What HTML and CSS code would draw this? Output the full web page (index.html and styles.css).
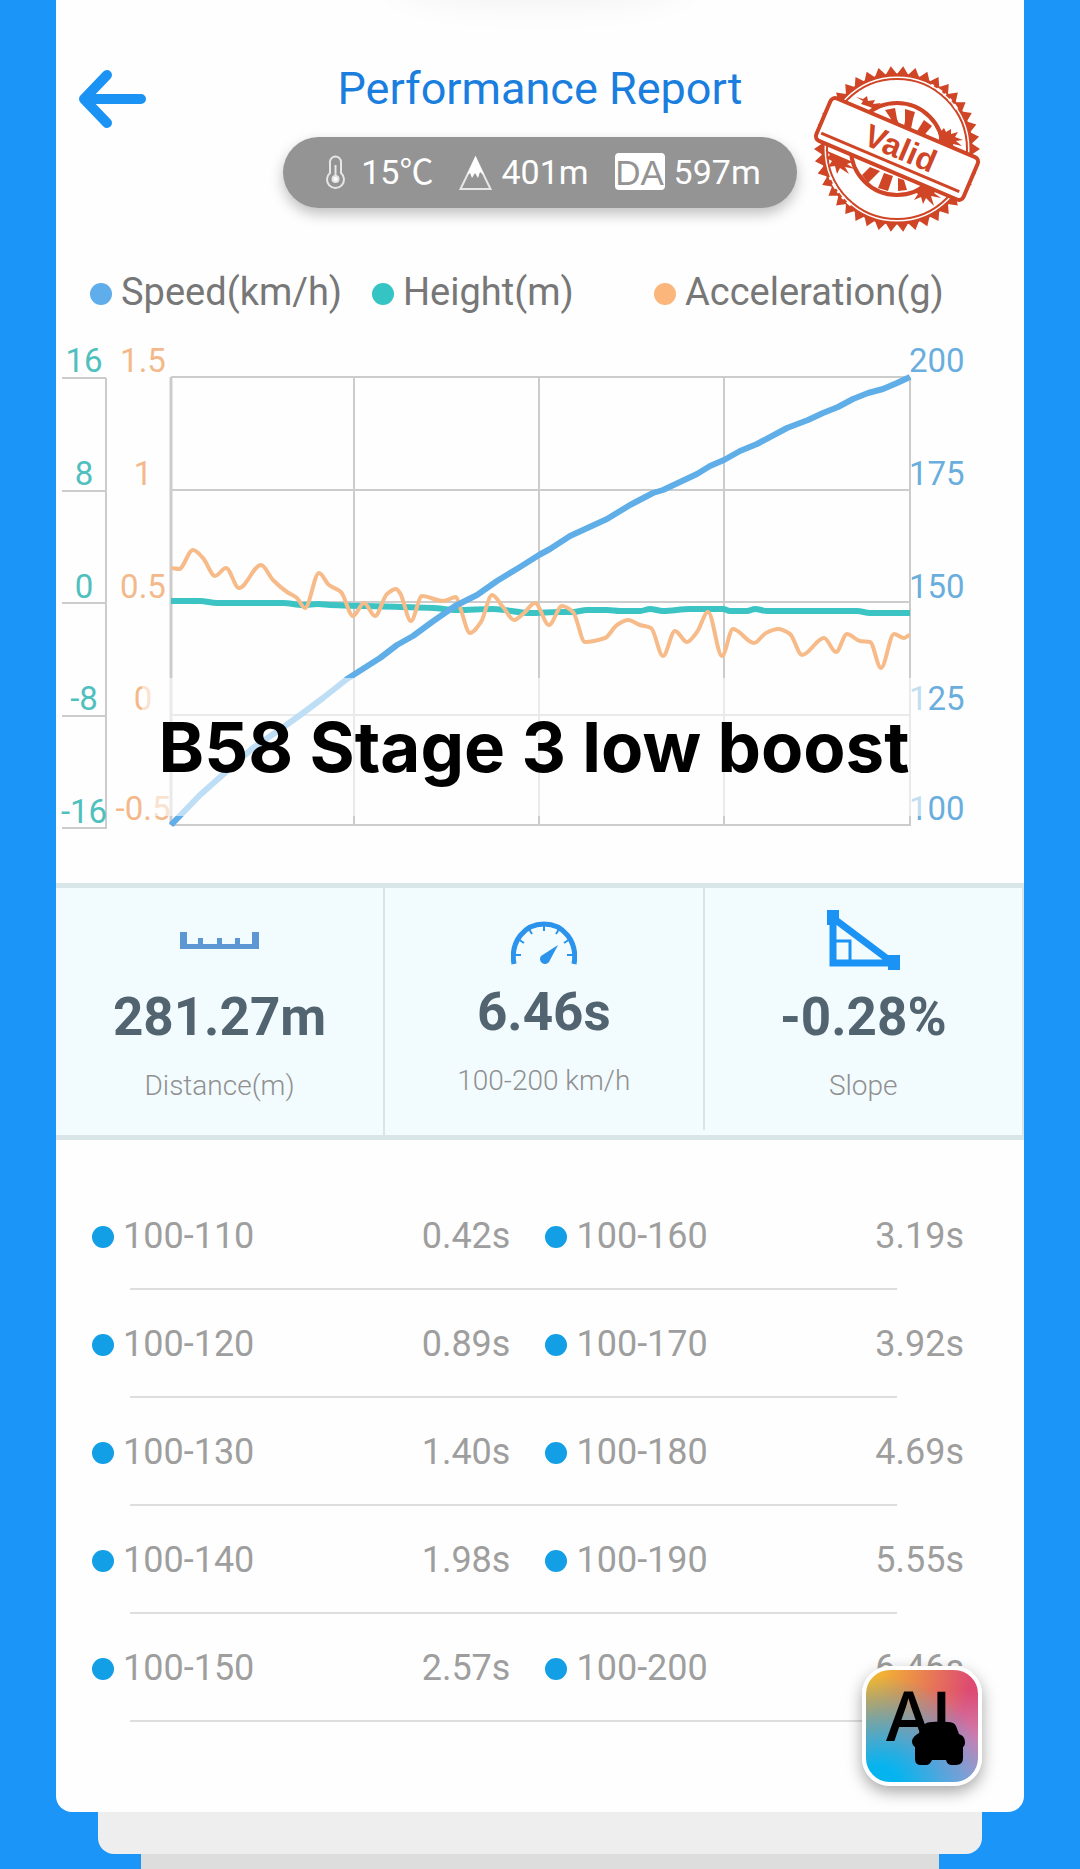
FILE: index.html
```html
<!DOCTYPE html>
<html lang="en">
<head>
    <meta charset="UTF-8">
    <meta name="viewport" content="width=device-width, initial-scale=1.0">
    <title>Performance Report</title>
    <link rel="stylesheet" href="styles.css">
</head>
<body>
    <main class="card">
        <header class="header">
            <button type="button" class="back" aria-label="Back">
                <svg width="68" height="58" viewBox="0 0 68 58">
                    <path d="M28 5 L5 29 L28 53 M6 29 H62" fill="none" stroke="#1b93f5" stroke-width="10" stroke-linecap="round" stroke-linejoin="round"/>
                    <path d="M5 29 L16 18 V40 Z" fill="#1b93f5"/>
                </svg>
            </button>

            <div class="heading">
                <h1>Performance Report</h1>
                <div class="conditions">
                    <span class="condition">
                        <svg width="33" height="34" viewBox="0 0 33 34" fill="none" stroke="#e6e6e6" stroke-width="2">
                            <path d="M11 18 V7 a5.500 5.500 0 0 1 11 0 V18 a8.500 8.500 0 1 1 -11 0 Z"/>
                            <path d="M16.500 10 V23"/>
                            <circle cx="16.500" cy="24" r="3" fill="#fff"/>
                        </svg>
                        15℃
                    </span>
                    <span class="condition">
                        <svg width="33" height="36" viewBox="0 0 33 36">
                            <path d="M16.500 4 L31.500 35 H1.500 Z" fill="none" stroke="#e6e6e6" stroke-width="2"/>
                            <path d="M16.500 2 L25 21 L21 18 L19 24 L16 19 L13 24 L11 19 L8 21 Z" fill="#fff"/>
                        </svg>
                        401m
                    </span>
                    <span class="condition"><abbr class="da">DA</abbr> 597m</span>
                </div>
            </div>

            <svg class="stamp" width="170" height="166" viewBox="-85 -83 170 166">
                <polygon id="stampTeeth" fill="#cf4526"/>
                <circle r="74" fill="#fff" stroke="#cf4526" stroke-width="3"/>
                <circle r="70" fill="none" stroke="#cf4526" stroke-width="2"/>
                <circle r="46" fill="none" stroke="#cf4526" stroke-width="4"/>
                <g fill="#cf4526">
                    <path d="M-12 -39 L-2 -41 L0 -30 L4 -20 L-5 -22 L-9 -25 L-6 -30 Z"/>
                    <path d="M8 -40 L18 -37 L16 -30 L13 -15 L6 -18 L8 -28 Z"/>
                    <path d="M27 -29 L35 -23 L24 -10 L17 -13 Z"/>
                    <path d="M-35 26 L-27 18 L-17 22 L-29 34 Z"/>
                    <path d="M-13 24 L-4 27 L-9 42 L-19 39 Z"/>
                    <path d="M1 29 L7 31 L10 41 L1 42 Z"/>
                    <path d="M-41 -52 L-34 -50 L-30 -53 L-29 -48 L-22 -49 L-24 -45 L-16 -46 L-23 -40 L-27 -42 L-36 -45 L-34 -48 Z"/>
                    <path d="M42 -16 L47 -21 L49 -17 L54 -20 L54 -15 L61 -17 L58 -12 L66 -9 L59 -8 L65 -3 L56 -5 L57 1 L42 -5 Z"/>
                    <path d="M-72 1 L-58 7 L-44 13 L-50 15 L-42 20 L-52 18 L-48 25 L-57 19 L-60 25 L-62 17 L-69 18 L-65 12 L-71 9 L-67 6 Z"/>
                    <path d="M17 42 L27 34 L42 40 L37 44 L44 49 L34 47 L37 57 L29 49 L26 55 L24 48 L17 51 L21 45 Z"/>
                </g>
                <!-- worn patches in the rim -->
                <g stroke="#fff" stroke-width="3" stroke-dasharray="3 4 6 3 2 5" fill="none">
                    <path d="M34 -64 A72 72 0 0 1 60 -40"/>
                    <path d="M-67 28 A72 72 0 0 0 -46 56"/>
                </g>
                <g transform="rotate(23)">
                    <rect x="-80" y="-23" width="160" height="46" rx="5" fill="#fff" stroke="#cf4526" stroke-width="4"/>
                    <path d="M-76 15 H74" stroke="#cf4526" stroke-width="3"/>
                    <text class="stamp-text" x="3" y="9" text-anchor="middle">Valid</text>
                </g>
            </svg>
        </header>

        <ul class="legend">
            <li class="speed">Speed(km/h)</li>
            <li class="height">Height(m)</li>
            <li class="accel">Acceleration(g)</li>
        </ul>

        <svg class="chart" viewBox="0 0 968 500" role="img" aria-label="Speed, height and acceleration">
            <g class="grid">
                <path d="M115 47 H854 M115 160 H854 M115 272 H854 M115 385 H854 M115 495 H854"/>
                <path d="M298 47 V495 M483 47 V495 M668 47 V495 M854 47 V496"/>
                <path class="axis" d="M115 47 V495"/>
                <path d="M6 48 H50 M6 161 H50 M6 273 H50 M6 386 H50 M6 498 H51 M50 48 V498"/>
            </g>
            <path id="heightLine" class="line height-line"/>
            <path id="accelLine" class="line accel-line"/>
            <path id="speedLine" class="line speed-line"/>
            <g class="scale height-scale">
                <text x="28" y="42">16</text>
                <text x="28" y="155">8</text>
                <text x="28" y="268">0</text>
                <text x="28" y="380">-8</text>
                <text x="28" y="493">-16</text>
            </g>
            <g class="scale accel-scale">
                <text x="87" y="42">1.5</text>
                <text x="87" y="155">1</text>
                <text x="87" y="268">0.5</text>
                <text x="87" y="380">0</text>
                <text x="87" y="490">-0.5</text>
            </g>
            <g class="scale speed-scale">
                <text x="853" y="42">200</text>
                <text x="853" y="155">175</text>
                <text x="853" y="268">150</text>
                <text x="853" y="380">125</text>
                <text x="853" y="490">100</text>
            </g>
            <rect class="note-box" x="86" y="348" width="780" height="138"/>
            <text class="note" x="478" y="442">B58 Stage 3 low boost</text>
        </svg>

        <section class="stats">
            <div class="stat">
                <div class="stat-icon">
                    <svg width="79" height="17" viewBox="0 0 79 17">
                        <path d="M0 0 H7 V12 H18 V6 H23 V12 H37 V6 H42 V12 H55 V6 H60 V12 H72 V0 H79 V17 H0 Z" fill="#5c97d4"/>
                    </svg>
                </div>
                <div class="stat-value">281.27m</div>
                <div class="stat-label">Distance(m)</div>
            </div>
            <div class="stat stat-time">
                <div class="stat-icon">
                    <svg width="66" height="44" viewBox="0 0 66 44" fill="none" stroke="#2b93ea">
                        <path d="M3 43 C-1 20 14 3 33 3 C52 3 67 20 63 43" stroke-width="5"/>
                        <path d="M33 4 V10 M18 8 L21 13 M48 8 L45 13 M7 18 L13 22 M59 18 L53 22 M4 34 H10 M62 34 H56" stroke-width="2"/>
                        <path d="M47 24 L38 41 A5 5 0 1 1 30 35 Z" fill="#2b93ea" stroke="none"/>
                    </svg>
                </div>
                <div class="stat-value">6.46s</div>
                <div class="stat-label">100-200 km/h</div>
            </div>
            <div class="stat">
                <div class="stat-icon">
                    <svg width="73" height="60" viewBox="0 0 73 60">
                        <path d="M6 8 V53 H66 Z" fill="none" stroke="#1b93f5" stroke-width="7"/>
                        <path d="M8 31 H23 V50" fill="none" stroke="#1b93f5" stroke-width="3"/>
                        <path d="M0 0 H12 V15 H0 Z M61 45 H73 V60 H61 Z" fill="#1b93f5"/>
                    </svg>
                </div>
                <div class="stat-value">-0.28%</div>
                <div class="stat-label">Slope</div>
            </div>
        </section>

        <table class="splits">
            <tr><th>100-110</th><td>0.42s</td><th>100-160</th><td>3.19s</td></tr>
            <tr><th>100-120</th><td>0.89s</td><th>100-170</th><td>3.92s</td></tr>
            <tr><th>100-130</th><td>1.40s</td><th>100-180</th><td>4.69s</td></tr>
            <tr><th>100-140</th><td>1.98s</td><th>100-190</th><td>5.55s</td></tr>
            <tr><th>100-150</th><td>2.57s</td><th>100-200</th><td>6.46s</td></tr>
        </table>

        <button type="button" class="ai-button" aria-label="AI car assistant">
            <svg viewBox="0 0 112 112">
                <text class="ai-text" x="20" y="71">AI</text>
                <path d="M58 55 Q60 52 66 52 Q74 51 82 52 Q88 52 90 56 L93 64 Q99 66 99 72 Q99 76 97 77 V88 Q97 95 90 95 H86 Q81 95 80 90 H66 Q64 95 60 95 H55 Q49 95 49 89 V77 Q46 75 46 71 Q47 66 53 63 Z"/>
            </svg>
        </button>
    </main>
    <div class="sheet sheet-second"></div>
    <div class="sheet sheet-third"></div>

    <script>
        const speed = [[115,495],[144,465],[171,441],[197,418],[229,396],[247,383],[267,368],[291,349],[324,328],[341,315],[357,306],[376,292],[399,276],[421,265],[441,251],[464,237],[483,225],[494,219],[514,206],[551,189],[574,175],[597,163],[607,160],[641,144],[654,136],[668,130],[684,121],[701,114],[731,98],[752,90],[767,83],[782,77],[797,69],[812,63],[827,59],[841,53],[854,47]];
        const height = [[115,271],[144,271],[161,273],[227,273],[247,275],[262,274],[274,275],[344,277],[377,278],[401,280],[437,279],[474,283],[504,282],[517,282],[531,280],[551,280],[564,281],[584,281],[594,279],[607,281],[634,279],[667,279],[674,281],[691,281],[699,279],[711,281],[801,281],[814,283],[854,283]];
        const accel = [[115,238],[123,239],[137,220],[147,228],[159,246],[170,238],[183,258],[205,235],[217,250],[231,262],[241,268],[249,278],[263,243],[273,255],[285,262],[297,286],[308,273],[319,286],[331,264],[340,259],[344,263],[355,291],[366,266],[387,271],[400,267],[404,277],[414,303],[425,292],[436,265],[447,277],[458,290],[468,283],[479,273],[493,295],[506,276],[517,282],[529,312],[549,308],[561,295],[572,290],[584,295],[595,298],[607,326],[619,301],[631,312],[641,302],[652,282],[666,326],[677,299],[698,313],[710,303],[722,299],[734,304],[746,325],[768,308],[780,322],[791,304],[804,311],[814,312],[825,338],[838,304],[848,308],[854,305]];

        // cubic curve through the points, flat at every peak and dip
        function smoothPath(points) {
            const slopes = points.map((p, i) => {
                if (i === 0 || i === points.length - 1) return 0;
                const a = points[i - 1];
                const b = points[i + 1];
                const before = (p[1] - a[1]) / (p[0] - a[0]);
                const after = (b[1] - p[1]) / (b[0] - p[0]);
                return before * after <= 0 ? 0 : 2 * before * after / (before + after);
            });
            let d = 'M' + points[0].join(' ');
            for (let i = 1; i < points.length; i++) {
                const a = points[i - 1];
                const b = points[i];
                const dx = (b[0] - a[0]) / 3;
                d += ' C' + [a[0] + dx, a[1] + slopes[i - 1] * dx, b[0] - dx, b[1] - slopes[i] * dx, b[0], b[1]].join(' ');
            }
            return d;
        }

        document.getElementById('speedLine').setAttribute('d', 'M' + speed.join(' L'));
        document.getElementById('heightLine').setAttribute('d', smoothPath(height));
        document.getElementById('accelLine').setAttribute('d', smoothPath(accel));

        const teeth = [];
        for (let i = 0; i < 84; i++) {
            const r = i % 2 ? 75 : 83;
            const angle = i * Math.PI / 42;
            teeth.push(r * Math.cos(angle) + ',' + r * Math.sin(angle));
        }
        document.getElementById('stampTeeth').setAttribute('points', teeth.join(' '));
    </script>
</body>
</html>
```
FILE: styles.css
```css
* {
    box-sizing: border-box;
}

body {
    margin: 0;
    background-color: #1b95f8;
    font-family: Roboto, "Noto Sans CJK SC", sans-serif;
}

button {
    border: none;
    padding: 0;
    background: none;
    cursor: pointer;
}

svg {
    display: block;
}

.card {
    position: relative;
    overflow: hidden;
    margin: 0 56px;
    padding-bottom: 90px;
    background-color: #fefefe;
    border-radius: 0 0 16px 16px;
}

/* soft shadow falling in from the top edge */
.card::before {
    content: "";
    position: absolute;
    top: -48px;
    left: 35%;
    width: 30%;
    height: 40px;
    border-radius: 50%;
    box-shadow: 0 4px 40px rgba(0, 0, 0, 0.08);
}

.sheet {
    height: 42px;
    margin: 0 98px;
    background-color: #eeeeee;
    border-radius: 0 0 16px 16px;
}

.sheet-third {
    height: 15px;
    margin: 0 141px;
    background-color: #dddddd;
    border-radius: 0;
}

.header {
    display: grid;
    grid-template-columns: 1fr auto 1fr;
    align-items: start;
    padding-top: 63px;
}

.back {
    justify-self: start;
    margin: 7px 0 0 23px;
}

.heading {
    text-align: center;
}

h1 {
    margin: 0 0 22px;
    font-size: 45px;
    line-height: 52px;
    font-weight: 400;
    color: #1a7ede;
}

.conditions {
    display: flex;
    align-items: center;
    gap: 26px;
    height: 71px;
    padding: 0 36px 2px;
    border-radius: 36px;
    background-color: #949494;
    box-shadow: 0 6px 14px rgba(0, 0, 0, 0.25);
    color: #fff;
    font-size: 34px;
    line-height: 40px;
}

.condition {
    display: flex;
    align-items: center;
    gap: 9px;
}

.da {
    width: 50px;
    height: 37px;
    border-radius: 4px;
    background-color: #fff;
    color: #949494;
    font-family: "Liberation Sans", sans-serif;
    font-size: 35px;
    line-height: 40px;
    text-align: center;
}

.stamp {
    justify-self: end;
    margin: 3px 42px 0 0;
}

.stamp-text {
    font: bold 32px "Liberation Sans", sans-serif;
    fill: #cf4526;
}

.legend {
    display: grid;
    grid-template-columns: repeat(3, minmax(0, 1fr));
    margin: 39px 88px 17px 34px;
    padding: 0;
    list-style: none;
    font-size: 38px;
    line-height: 42px;
    color: #777;
    white-space: nowrap;
}

.legend li::before,
.splits th::before {
    content: "";
    display: inline-block;
    width: 22px;
    height: 22px;
    margin-right: 9px;
    border-radius: 50%;
    background-color: #129fe6;
}

.legend .speed::before {
    background-color: #5fadea;
}

.legend .height::before {
    background-color: #35c4c4;
}

.legend .accel::before {
    background-color: #fbb67c;
}

.chart {
    width: 100%;
}

.grid path {
    fill: none;
    stroke: #cccccc;
    stroke-width: 2;
}

.grid .axis {
    stroke-width: 3;
}

.line {
    fill: none;
    stroke-linejoin: round;
}

.speed-line {
    stroke: #60aee8;
    stroke-width: 6;
}

.height-line {
    stroke: #3cc4c4;
    stroke-width: 6;
}

.accel-line {
    stroke: #f6bb88;
    stroke-width: 4;
}

.scale {
    font-size: 33px;
    text-anchor: middle;
}

.height-scale {
    fill: #4fc0bd;
}

.accel-scale {
    fill: #f3b98a;
}

.speed-scale {
    fill: #6aaede;
    text-anchor: start;
}

.note-box {
    fill: #fdfdfd;
    fill-opacity: 0.6;
}

.note {
    font-family: Inter, sans-serif;
    font-size: 69px;
    font-weight: 700;
    text-anchor: middle;
}

.stats {
    display: grid;
    grid-template-columns: 34fr 33fr 33fr;
    margin: 53px 0 42px;
    border-top: 5px solid #d9e6e7;
    border-bottom: 5px solid #d9e6e7;
    background-color: #f2fbfe;
    text-align: center;
}

.stat {
    padding: 22px 0 32px;
    border-right: 2px solid #d9e6e7;
}

.stat-time {
    margin-bottom: 5px;
}

.stat-icon {
    display: flex;
    justify-content: center;
    align-items: center;
    height: 60px;
}

.stat-time .stat-icon {
    height: 55px;
    align-items: flex-end;
}

.stat-value {
    margin: 16px 0 21px;
    font-size: 53px;
    line-height: 62px;
    font-weight: 700;
    color: #536471;
}

.stat-label {
    font-size: 28px;
    line-height: 34px;
    font-weight: 300;
    color: #909090;
}

.splits {
    width: calc(100% - 96px);
    margin-left: 36px;
    table-layout: fixed;
    border-collapse: collapse;
    font-size: 36px;
    line-height: 42px;
    color: #9e9e9e;
}

.splits tr {
    height: 108px;
    background: linear-gradient(#dedede, #dedede) no-repeat 38px 100% / calc(100% - 105px) 2px;
}

.splits th,
.splits td {
    width: 24%;
    padding: 0;
    font-weight: 400;
    text-align: left;
}

.splits td {
    text-align: right;
}

.splits th:first-child {
    width: 26%;
}

.splits td:nth-child(2) {
    width: 26%;
    padding-right: 35px;
}

.ai-button {
    position: absolute;
    right: 42px;
    bottom: 26px;
    width: 120px;
    height: 120px;
    border: 4px solid #fff;
    border-radius: 28px;
    background:
        radial-gradient(circle at 15% 100%, #05b4ee 12%, rgba(5, 180, 238, 0) 70%),
        radial-gradient(circle at 0% 0%, #f2b233 12%, rgba(242, 178, 51, 0) 65%),
        linear-gradient(#de4a72 20%, #cf7db0 60%, #9c9fd2);
    background-origin: border-box;
    box-shadow: 0 6px 16px rgba(0, 0, 0, 0.35);
}

.ai-button svg {
    overflow: visible;
}

.ai-text {
    font: 600 68px "Open Sans", sans-serif;
}
```
